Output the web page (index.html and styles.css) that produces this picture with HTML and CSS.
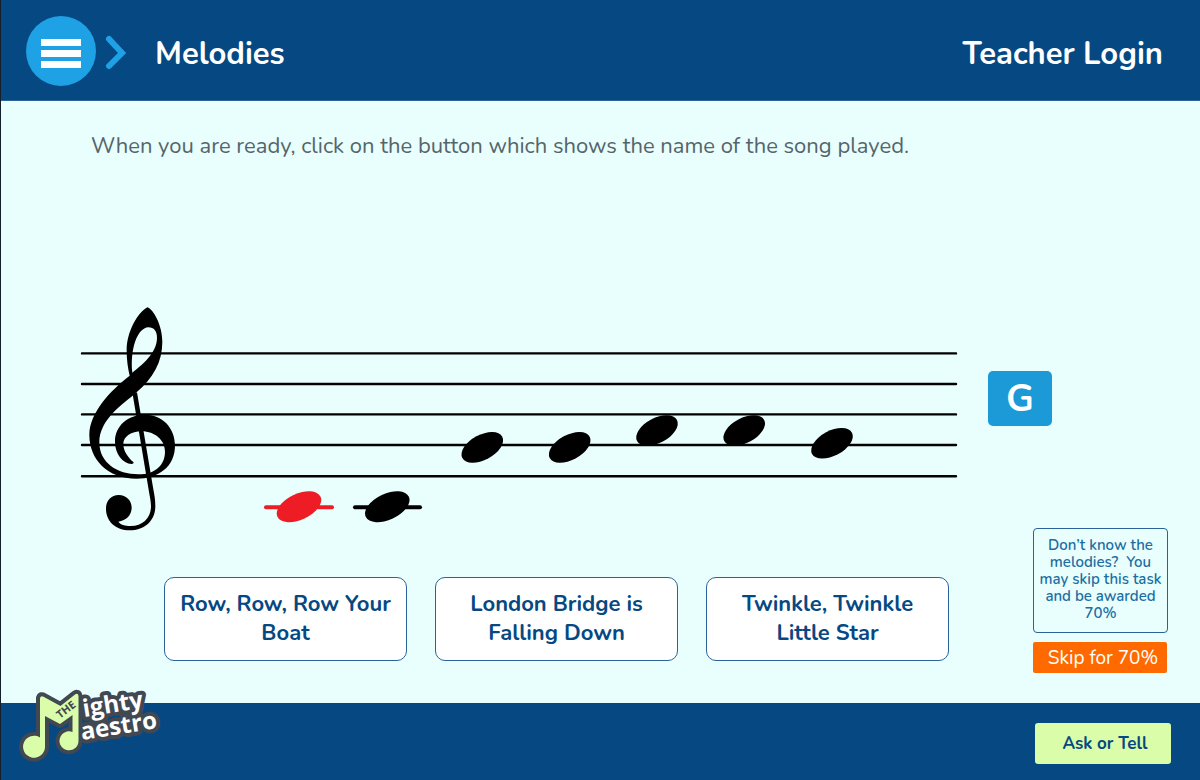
FILE: index.html
```html
<!DOCTYPE html>
<html lang="en">
<head>
    <meta charset="UTF-8">
    <meta name="viewport" content="width=device-width, initial-scale=1.0">
    <title>Melodies - The Mighty Maestro</title>
    <link rel="stylesheet" href="styles.css">
</head>
<body>
    <header class="header">
        <button class="menu-button" type="button" aria-label="Menu">
            <span class="bar"></span>
            <span class="bar"></span>
            <span class="bar"></span>
        </button>
        <svg class="chevron" viewBox="0 0 22 36" aria-hidden="true">
            <path d="M4 4 L17 18 L4 31" />
        </svg>
        <h1 class="title">Melodies</h1>
        <a class="login" href="#login">Teacher Login</a>
    </header>

    <main class="main">
        <p class="intro">When you are ready, click on the button which shows the name of the song played.</p>

        <div class="staff-row">
            <svg class="staff" viewBox="81 300 876 228" role="img" aria-label="Melody on a staff">
                <g class="lines">
                    <path d="M82 353.4H956M82 384H956M82 414.4H956M82 445H956M82 476.3H956" />
                </g>
                <!-- treble clef -->
                <g transform="translate(70 295) scale(.3333)">
                    <path fill-rule="evenodd" d="M232 37 C250 43 277 90 277 140 C277 200 250 250 198 293 C160 327 88 372 88 442 C88 504 142 538 205 538 C258 538 285 508 285 470 C285 436 255 409 215 409 C184 409 160 425 160 447 C160 467 173 487 191 502 Q191 507 185 507 C158 505 135 477 135 440 C135 392 174 359 225 359 C276 359 315 397 315 452 C315 515 265 551 200 551 C112 551 58 493 58 420 C58 352 123 285 179 242 C174 220 170 196 170 166 C170 112 202 53 232 37 Z M187 233 C215 210 261 175 261 128 C261 109 252 97 235 97 C202 99 180 162 187 233 Z" />
                    <path d="M188 298 L201 292 L250 583 C253 600 256 614 256 634 C256 679 221 706 180 706 C136 706 108 678 108 641 C108 616 124 600 146 600 C169 600 185 617 185 638 C185 660 169 677 145 680 C151 689 165 693 182 693 C219 693 243 668 243 634 C243 617 239 604 237 590 Z" />
                </g>
                <!-- notes with ledger line -->
                <g class="note current">
                    <path d="M266 507.3H332" />
                    <ellipse cx="299" cy="506.7" rx="23.8" ry="13" transform="rotate(-25 299 506.7)" />
                </g>
                <g class="note">
                    <path d="M355 507.3H420" />
                    <ellipse cx="387.3" cy="506.7" rx="23.8" ry="13" transform="rotate(-25 387.3 506.7)" />
                </g>
                <g class="note">
                    <ellipse cx="482.3" cy="447.4" rx="22.6" ry="12.5" transform="rotate(-28 482.3 447.4)" />
                    <ellipse cx="569.7" cy="447.4" rx="22.6" ry="12.5" transform="rotate(-28 569.7 447.4)" />
                    <ellipse cx="657" cy="430.5" rx="22.6" ry="12.5" transform="rotate(-28 657 430.5)" />
                    <ellipse cx="744.2" cy="430.5" rx="22.6" ry="12.5" transform="rotate(-28 744.2 430.5)" />
                    <ellipse cx="832" cy="443.3" rx="22.6" ry="12.5" transform="rotate(-28 832 443.3)" />
                </g>
            </svg>
            <div class="note-name">G</div>
        </div>

        <div class="bottom-row">
            <div class="answers">
                <button class="answer" type="button">Row, Row, Row Your Boat</button>
                <button class="answer" type="button">London Bridge is Falling Down</button>
                <button class="answer" type="button">Twinkle, Twinkle Little Star</button>
            </div>
            <aside class="skip">
                <p class="skip-text">Don’t know the melodies?&nbsp; You may skip this task and be awarded 70%</p>
                <button class="skip-button" type="button">Skip for 70%</button>
            </aside>
        </div>
    </main>

    <footer class="footer">
        <a class="logo" href="#home" aria-label="The Mighty Maestro">
            <svg viewBox="18 684 144 80">
                <g class="logo-words outline">
                    <text x="83" y="718" transform="rotate(-9 83 718)">ighty</text>
                    <text x="81" y="741" transform="rotate(-9 81 741)">aestro</text>
                </g>
                <g class="logo-mark">
                    <path class="outline" d="M39 699 Q40 696 43 698 L59.500 707 L74 695.500 Q77 693.500 77.500 697 V741.700 A9.500 9.500 0 1 1 71.500 733 V716 L59 725 L44 717 V748.500 A11 11 0 1 1 39 738.500 Z" />
                    <path d="M39 699 Q40 696 43 698 L59.500 707 L74 695.500 Q77 693.500 77.500 697 V741.700 A9.500 9.500 0 1 1 71.500 733 V716 L59 725 L44 717 V748.500 A11 11 0 1 1 39 738.500 Z" />
                </g>
                <g class="logo-words">
                    <text x="83" y="718" transform="rotate(-9 83 718)">ighty</text>
                    <text x="81" y="741" transform="rotate(-9 81 741)">aestro</text>
                </g>
                <text class="logo-the" x="59" y="720" transform="rotate(-38 59 720)">THE</text>
            </svg>
        </a>
        <button class="ask-button" type="button">Ask or Tell</button>
    </footer>
</body>
</html>
```
FILE: styles.css
```css
* {
    box-sizing: border-box;
}
body {
    margin: 0;
    min-height: 100vh;
    display: flex;
    flex-direction: column;
    border-left: 1px solid #14212c;
    font-family: 'Nunito', 'Lato', sans-serif;
    background-color: #e8fffd;
    color: #064882;
}
button {
    font-family: inherit;
    cursor: pointer;
}
.header {
    display: flex;
    align-items: center;
    height: 101px;
    padding: 2px 37px 0 25px;
    background-color: #064882;
    border-bottom: 1px solid #2a6299;
    color: #fff;
}
.menu-button {
    display: flex;
    flex-direction: column;
    align-items: center;
    justify-content: center;
    gap: 4px;
    width: 70px;
    height: 70px;
    padding: 4px 0 0;
    border: none;
    border-radius: 50%;
    background-color: #1fa1e6;
}
.bar {
    width: 40px;
    height: 7px;
    background-color: #fff;
}
.chevron {
    width: 22px;
    height: 36px;
    margin: 4px 28px 0 9px;
    fill: none;
    stroke: #1fa1e6;
    stroke-width: 6;
    stroke-linecap: round;
}
.title,
.login {
    margin: 0;
    padding-top: 6px;
    font-size: 31px;
    font-weight: 700;
}
.login {
    margin-left: auto;
    color: #fff;
    text-decoration: none;
}
.main {
    flex: 1;
    display: flex;
    flex-direction: column;
    padding: 32px 32px 30px 80px;
}
.intro {
    margin: 0 0 0 10px;
    font-size: 22px;
    line-height: 26px;
    color: #56646b;
}
.staff-row {
    display: flex;
    align-items: center;
    gap: 31px;
    margin-top: auto;
    padding-right: 116px;
}
.staff {
    flex: 1;
    min-width: 0;
    overflow: visible;
}
.lines {
    stroke: #000;
    stroke-width: 2.4;
    stroke-linecap: round;
}
.note {
    fill: #000;
    stroke: #000;
    stroke-linecap: round;
}
.note path {
    stroke-width: 4;
}
.note ellipse {
    stroke: none;
}
.current {
    fill: #ee1c24;
    stroke: #ee1c24;
}
.note-name {
    width: 64px;
    margin-bottom: 31px;
    border-radius: 5px;
    background-color: #1b9ad7;
    color: #fff;
    font-size: 38px;
    font-weight: 700;
    line-height: 55px;
    text-align: center;
}
.bottom-row {
    display: flex;
    align-items: flex-end;
    gap: 84px;
    padding-left: 83px;
}
.answers {
    flex: 1;
    display: grid;
    grid-template-columns: repeat(3, 1fr);
    gap: 28px;
    margin-bottom: 12px;
}
.answer {
    min-height: 84px;
    padding: 0 14px;
    border: 1px solid #2a6299;
    border-radius: 10px;
    background-color: #fff;
    color: #064882;
    font-size: 22px;
    font-weight: 700;
    line-height: 29px;
}
.skip {
    width: 135px;
}
.skip-text {
    margin: 0 0 9px;
    padding: 8px 4px 10px;
    border: 1px solid #2a6299;
    border-radius: 4px;
    color: #1d6ea3;
    font-size: 15px;
    font-weight: 600;
    line-height: 17px;
    text-align: center;
}
.skip-button {
    display: block;
    width: 134px;
    height: 31px;
    padding: 0 0 0 6px;
    border: none;
    border-radius: 2px;
    background-color: #ff6a00;
    color: #fff;
    font-size: 19px;
}
.footer {
    display: flex;
    align-items: center;
    justify-content: space-between;
    height: 77px;
    padding: 3px 29px 0 18px;
    background-color: #064882;
}
.logo {
    margin-top: -40px;
}
.logo svg {
    display: block;
    width: 144px;
    height: 80px;
    overflow: visible;
}
.logo-words {
    fill: #fff;
    font-family: 'Open Sans', sans-serif;
    font-size: 24px;
    font-weight: 700;
}
.logo-mark {
    fill: #dafda9;
}
.outline {
    fill: #414852;
    stroke: #414852;
    stroke-width: 8;
    stroke-linejoin: round;
}
.logo-the {
    fill: #414852;
    font-family: 'Open Sans', sans-serif;
    font-size: 11px;
    font-weight: 700;
}
.ask-button {
    width: 136px;
    height: 41px;
    padding: 0 0 0 4px;
    border: none;
    border-radius: 3px;
    background-color: #dafda9;
    color: #064882;
    font-size: 17px;
    font-weight: 700;
}
```
